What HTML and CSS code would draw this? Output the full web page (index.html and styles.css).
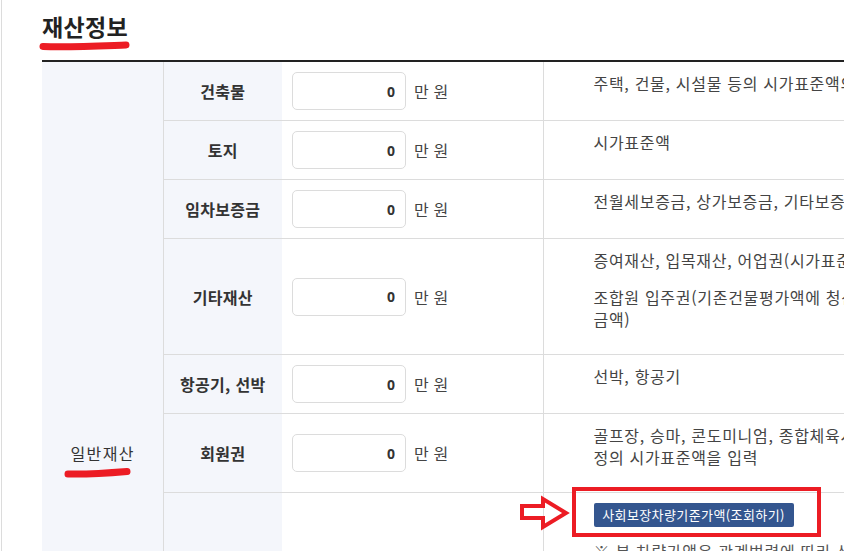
FILE: index.html
```html
<!DOCTYPE html>
<html lang="ko">
<head>
<meta charset="utf-8">
<title>재산정보</title>
<link rel="stylesheet" href="styles.css">
</head>
<body>
<div class="page">
  <h2 class="title">재산정보<svg class="mark mark-title" width="92" height="12" viewBox="0 0 92 12"><path d="M4 7.5 C 30 8.5, 60 7, 87 6" fill="none" stroke="#ec1c24" stroke-width="7" stroke-linecap="round"/></svg></h2>
  <table class="asset">
    <colgroup>
      <col class="c-group"><col class="c-label"><col class="c-input"><col class="c-desc">
    </colgroup>
    <tr>
      <th rowspan="7" class="group"><span class="group-label">일반재산<svg class="mark mark-group" width="68" height="14" viewBox="0 0 68 14"><path d="M4 9 C 25 9.5, 45 8, 63 6.5" fill="none" stroke="#ec1c24" stroke-width="7" stroke-linecap="round"/></svg></span></th>
      <th class="label">건축물</th>
      <td class="amount"><input class="num" type="text" value="0"><span class="unit">만 원</span></td>
      <td class="desc"><p>주택, 건물, 시설물 등의 시가표준액의 합계액을 입력</p></td>
    </tr>
    <tr>
      <th class="label">토지</th>
      <td class="amount"><input class="num" type="text" value="0"><span class="unit">만 원</span></td>
      <td class="desc"><p>시가표준액</p></td>
    </tr>
    <tr>
      <th class="label">임차보증금</th>
      <td class="amount"><input class="num" type="text" value="0"><span class="unit">만 원</span></td>
      <td class="desc"><p>전월세보증금, 상가보증금, 기타보증금</p></td>
    </tr>
    <tr>
      <th class="label">기타재산</th>
      <td class="amount"><input class="num" type="text" value="0"><span class="unit">만 원</span></td>
      <td class="desc"><p>증여재산, 입목재산, 어업권(시가표준액)</p><p>조합원 입주권(기존건물평가액에 청산금을 더한<br>금액)</p></td>
    </tr>
    <tr>
      <th class="label">항공기, 선박</th>
      <td class="amount"><input class="num" type="text" value="0"><span class="unit">만 원</span></td>
      <td class="desc"><p>선박, 항공기</p></td>
    </tr>
    <tr>
      <th class="label">회원권</th>
      <td class="amount"><input class="num" type="text" value="0"><span class="unit">만 원</span></td>
      <td class="desc"><p>골프장, 승마, 콘도미니엄, 종합체육시설 이용회원권 등 지방세법 규<br>정의 시가표준액을 입력</p></td>
    </tr>
    <tr class="last">
      <th class="label"></th>
      <td class="amount"></td>
      <td class="desc desc-last">
        <svg class="arrow" width="54" height="38" viewBox="0 0 54 38"><polygon points="4,11 25,11 25,4 48,18 25,32 25,23 4,23" fill="none" stroke="#ec1c24" stroke-width="4" stroke-linejoin="miter"/></svg>
        <span class="callout"></span>
        <button class="lookup" type="button">사회보장차량기준가액(조회하기)</button>
        <p class="note">※ 본 차량가액은 관계법령에 따라 산정된 기준가액으로 실제 거래가액과 다를 수 있습니다.</p>
      </td>
    </tr>
  </table>
</div>
</body>
</html>
```
FILE: styles.css
```css
html, body {
  margin: 0;
  overflow: hidden;
  background: #fff;
}
body {
  font-family: "Noto Sans CJK KR", "Noto Sans", sans-serif;
  color: #333;
}
.page {
  margin-left: 1px;
  border-left: 1px solid #dcdcdc;
  padding: 11px 0 0 40px;
  min-height: 900px;
}
.title {
  position: relative;
  display: inline-block;
  margin: 0 0 19px;
  font-size: 23px;
  line-height: 30px;
  font-weight: bold;
  letter-spacing: 0.3px;
  color: #222;
}
.mark {
  position: absolute;
  display: block;
}
.mark-title {
  left: -3px;
  top: 28px;
}
.asset {
  border-collapse: collapse;
  table-layout: fixed;
  width: 1201px;
  border-top: 2px solid #222;
}
.c-group { width: 121px; }
.c-label { width: 119px; }
.c-input { width: 261px; }
.c-desc { width: 700px; }
.group {
  background: #f4f6fb;
  border-right: 1px solid #dcdcdc;
  font-weight: normal;
  font-size: 16px;
  letter-spacing: 1.4px;
  color: #333;
  vertical-align: middle;
  padding: 0;
}
.group-label {
  position: relative;
  display: inline-block;
  line-height: 22px;
  padding-left: 1px;
}
.mark-group {
  left: -6px;
  top: 23px;
}
.label {
  background: #f4f6fb;
  border-bottom: 1px solid #dcdcdc;
  font-size: 16px;
  font-weight: bold;
  letter-spacing: 0.3px;
  color: #333;
  text-align: center;
  vertical-align: middle;
  padding: 0;
}
.amount {
  border-bottom: 1px solid #dcdcdc;
  padding: 10px;
  vertical-align: middle;
  white-space: nowrap;
}
.num {
  box-sizing: border-box;
  width: 114px;
  height: 38px;
  border: 1px solid #dcdcdc;
  border-radius: 5px;
  padding: 0 10px;
  text-align: right;
  font-family: "Noto Sans", sans-serif;
  font-size: 14px;
  font-weight: bold;
  color: #333;
  vertical-align: middle;
  background: #fff;
}
.unit {
  margin-left: 8px;
  font-size: 16px;
  letter-spacing: 0.2px;
  color: #444;
  vertical-align: middle;
}
.desc {
  position: relative;
  border-bottom: 1px solid #dcdcdc;
  border-left: 1px solid #dcdcdc;
  padding: 10px 0 24px 50px;
  vertical-align: top;
  font-size: 16px;
  letter-spacing: 0.7px;
  line-height: 22px;
  color: #444;
  white-space: nowrap;
}
.desc p {
  margin: 0;
}
.desc p + p {
  margin-top: 15px;
}
.desc-last {
  height: 317px;
}
.lookup {
  display: block;
  width: 200px;
  height: 24px;
  padding: 0;
  border: 0;
  border-radius: 2px;
  background: #34568f;
  color: #fff;
  font-family: "Noto Sans CJK KR", sans-serif;
  font-size: 13px;
  letter-spacing: 0.4px;
  line-height: 24px;
}
.desc .note {
  margin-top: 13px;
  color: #555;
}
.arrow {
  position: absolute;
  left: -26px;
  top: 2px;
}
.callout {
  position: absolute;
  left: 28px;
  top: -6px;
  width: 241px;
  height: 42px;
  border: 4px solid #ec1c24;
}
```
